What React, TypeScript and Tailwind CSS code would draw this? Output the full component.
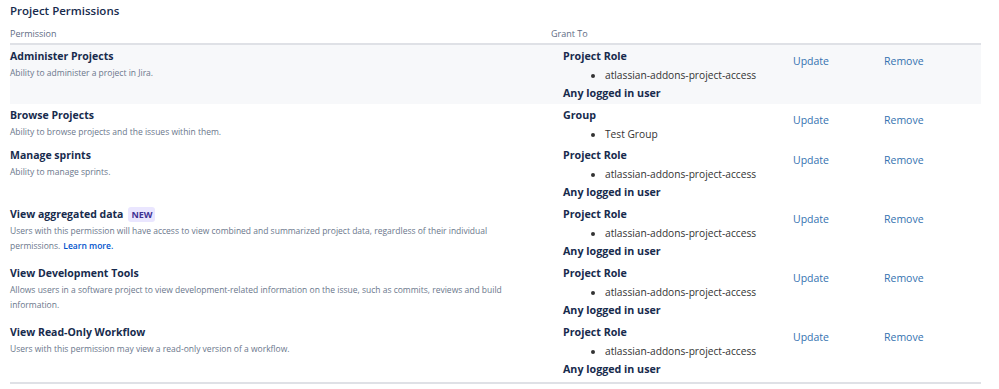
import React from 'react';

type Grant = {
  label: string;
  items?: string[];
};

type Permission = {
  id: string;
  name: string;
  description: string;
  isNew?: boolean;
  learnMore?: boolean;
  grants: Grant[];
};

const permissions: Permission[] = [
  {
    id: 'administer',
    name: 'Administer Projects',
    description: 'Ability to administer a project in Jira.',
    grants: [{ label: 'Project Role', items: ['atlassian-addons-project-access'] }, { label: 'Any logged in user' }],
  },
  {
    id: 'browse',
    name: 'Browse Projects',
    description: 'Ability to browse projects and the issues within them.',
    grants: [{ label: 'Group', items: ['Test Group'] }],
  },
  {
    id: 'sprints',
    name: 'Manage sprints',
    description: 'Ability to manage sprints.',
    grants: [{ label: 'Project Role', items: ['atlassian-addons-project-access'] }, { label: 'Any logged in user' }],
  },
  {
    id: 'aggregated',
    name: 'View aggregated data',
    isNew: true,
    learnMore: true,
    description:
      'Users with this permission will have access to view combined and summarized project data, regardless of their individual permissions.',
    grants: [{ label: 'Project Role', items: ['atlassian-addons-project-access'] }, { label: 'Any logged in user' }],
  },
  {
    id: 'devtools',
    name: 'View Development Tools',
    description:
      'Allows users in a software project to view development-related information on the issue, such as commits, reviews and build information.',
    grants: [{ label: 'Project Role', items: ['atlassian-addons-project-access'] }, { label: 'Any logged in user' }],
  },
  {
    id: 'workflow',
    name: 'View Read-Only Workflow',
    description: 'Users with this permission may view a read-only version of a workflow.',
    grants: [{ label: 'Project Role', items: ['atlassian-addons-project-access'] }, { label: 'Any logged in user' }],
  },
];

export default function App() {
  return (
    <div
      className="min-h-[389px] bg-white pl-[10px] text-[#172b4d]"
      style={{ fontFamily: '"Open Sans", "Noto Sans", sans-serif' }}
    >
      <h2 className="h-[22px] pt-[2px] text-[11.5px] font-semibold leading-[18px]">Project Permissions</h2>

      <div className="w-[971px]">
        <div className="grid h-[23px] grid-cols-[531px_242px_91px_1fr] border-b-2 border-[#dfe1e6] pt-[4px] text-[9px] leading-[16px] text-[#5e6c84]">
          <div>Permission</div>
          <div className="pl-[10px]">Grant To</div>
          <div />
          <div />
        </div>

        {permissions.map((permission, index) => (
          <div
            key={permission.id}
            className={`grid grid-cols-[531px_242px_91px_1fr] pb-[1px] pt-[2px] ${
              index === 0 ? 'bg-[#f7f8fa]' : ''
            } ${index === permissions.length - 1 ? 'border-b-2 border-[#dfe1e6] pb-[3px]' : ''}`}
          >
            <div>
              <div className="flex items-center text-[10.5px] font-bold leading-[18px]">
                {permission.name}
                {permission.isNew && (
                  <span className="ml-[5px] rounded-[3px] bg-[#eae6ff] px-[3px] text-[9px] font-bold leading-[15px] text-[#403294]">
                    NEW
                  </span>
                )}
              </div>
              <p className="w-[495px] text-[8.5px] leading-[15px] text-[#6b778c]">
                {permission.description}
                {permission.learnMore && (
                  <a href="#" className="ml-[3px] font-semibold text-[#0052cc]">
                    Learn more.
                  </a>
                )}
              </p>
            </div>

            <div className="pl-[22px]">
              {permission.grants.map((grant) => (
                <div key={grant.label}>
                  <div className="text-[10.7px] font-bold leading-[19px]">{grant.label}</div>
                  {grant.items && (
                    <ul className="list-disc pl-[42px] text-[10.2px] leading-[18px] text-[#333333]">
                      {grant.items.map((item) => (
                        <li key={item}>{item}</li>
                      ))}
                    </ul>
                  )}
                </div>
              ))}
            </div>

            <div className="pl-[10px] pt-[5px] text-[10.5px] leading-[18px]">
              <a href="#" className="text-[#3572b0]">
                Update
              </a>
            </div>
            <div className="pl-[10px] pt-[5px] text-[10.5px] leading-[18px]">
              <a href="#" className="text-[#3572b0]">
                Remove
              </a>
            </div>
          </div>
        ))}
      </div>
    </div>
  );
}
